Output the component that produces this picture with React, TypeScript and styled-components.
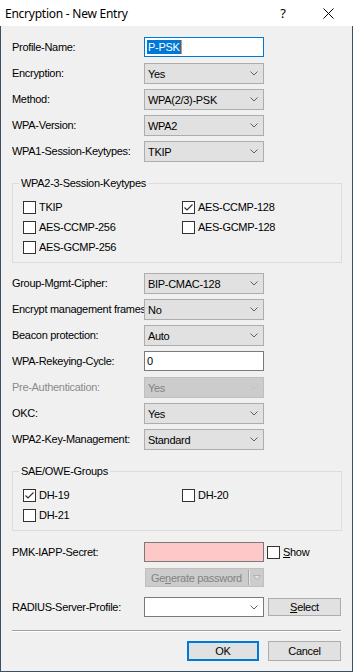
import React from "react";
import styled, { createGlobalStyle } from "styled-components";

const UI_FONT = `"Liberation Sans", Arial, sans-serif`;
const TITLE_FONT = `"Noto Sans", "Open Sans", sans-serif`;

const GlobalStyle = createGlobalStyle`
  html, body { margin: 0; padding: 0; background: #f0f0f0; }
  body { font-family: ${UI_FONT}; font-size: 11px; color: #000; letter-spacing: -0.3px; }
`;

const Window = styled.div`
  width: 353px;
  height: 672px;
  display: flex;
  flex-direction: column;
  box-sizing: border-box;
  overflow: hidden;
`;

const TitleBar = styled.div`
  height: 26px;
  flex: none;
  display: flex;
  align-items: center;
  background: #fff;
  padding-left: 5px;
  font-family: ${TITLE_FONT};
  font-size: 12px;
  color: #000;
`;

const TitleText = styled.div`
  flex: 1;
  letter-spacing: -0.25px;
`;

const TitleButton = styled.div<{ $w: number }>`
  width: ${(p) => p.$w}px;
  height: 26px;
  display: flex;
  align-items: center;
  justify-content: center;
  font-size: 13px;
`;

const Body = styled.div`
  flex: 1;
  display: flex;
  flex-direction: column;
  background: #f0f0f0;
  border: 1px solid #3f4f63;
  border-top: none;
  padding: 8px 10px 0 11px;
`;

const FieldRow = styled.div<{ $h?: number; $pt?: number; $mt?: number }>`
  display: flex;
  align-items: flex-start;
  box-sizing: border-box;
  height: ${(p) => p.$h ?? 26}px;
  padding-top: ${(p) => p.$pt ?? 3}px;
  margin-top: ${(p) => p.$mt ?? 0}px;
  flex: none;
`;

const Label = styled.div<{ $disabled?: boolean }>`
  width: 132px;
  flex: none;
  height: 21px;
  line-height: 21px;
  white-space: nowrap;
  overflow: hidden;
  color: ${(p) => (p.$disabled ? "#8a8a8a" : "#000")};
`;

type ComboVariant = "normal" | "disabled" | "white";

const comboColors: Record<ComboVariant, { bg: string; border: string; fg: string }> = {
  normal: { bg: "#e1e1e1", border: "#adadad", fg: "#000" },
  disabled: { bg: "#cccccc", border: "#bfbfbf", fg: "#838383" },
  white: { bg: "#ffffff", border: "#7a7a7a", fg: "#000" },
};

const Combo = styled.div<{ $variant: ComboVariant; $h?: number }>`
  width: 120px;
  height: ${(p) => p.$h ?? 21}px;
  box-sizing: border-box;
  display: flex;
  align-items: center;
  justify-content: space-between;
  padding: 0 5px 0 3px;
  background: ${(p) => comboColors[p.$variant].bg};
  border: 1px solid ${(p) => comboColors[p.$variant].border};
  color: ${(p) => comboColors[p.$variant].fg};
  white-space: nowrap;
  flex: none;
`;

const TextBox = styled.div<{ $focused?: boolean; $tint?: string }>`
  width: 120px;
  height: 20px;
  box-sizing: border-box;
  display: flex;
  align-items: center;
  padding-left: 2px;
  background: ${(p) => p.$tint ?? "#fff"};
  border: 1px solid ${(p) => (p.$focused ? "#0078d7" : "#7a7a7a")};
  flex: none;
`;

const Selection = styled.span`
  background: #0078d7;
  color: #fff;
  line-height: 14px;
  padding: 0 1px;
`;

const Caret = styled.span`
  display: inline-block;
  width: 1px;
  height: 14px;
  background: #ff8728;
`;

const GroupBox = styled.fieldset<{ $mt: number }>`
  margin: ${(p) => p.$mt}px 0 0 0;
  padding: 0;
  border: 1px solid #dcdcdc;
  flex: none;
  min-inline-size: 0;
`;

const Legend = styled.legend`
  margin-left: 6px;
  padding: 0 2px;
  font-size: 11px;
  line-height: 13px;
`;

const CheckGrid = styled.div`
  display: grid;
  grid-template-columns: 159px 1fr;
  grid-auto-rows: 20px;
  padding: 7px 0 5px 10px;
`;

const CheckItem = styled.label<{ $h?: number; $ml?: number }>`
  display: flex;
  align-items: center;
  gap: 3px;
  height: ${(p) => p.$h ?? 20}px;
  margin-left: ${(p) => p.$ml ?? 0}px;
  white-space: nowrap;
`;

const Box = styled.span`
  width: 13px;
  height: 13px;
  box-sizing: border-box;
  border: 1px solid #333;
  background: #fff;
  display: flex;
  align-items: center;
  justify-content: center;
  flex: none;
`;

const Mnemonic = styled.span`
  text-decoration: underline;
`;

const SplitButton = styled.div`
  width: 119px;
  height: 19px;
  margin-left: 1px;
  box-sizing: border-box;
  display: flex;
  align-items: center;
  background: #cccccc;
  border: 1px solid #bfbfbf;
  color: #838383;
  flex: none;
`;

const SplitLabel = styled.div`
  flex: 1;
  padding-left: 5px;
  white-space: nowrap;
`;

const SplitDivider = styled.div`
  width: 1px;
  height: 15px;
  background: #a8a8a8;
  border-right: 1px solid #e6e6e6;
`;

const SplitArrow = styled.div`
  width: 13px;
  display: flex;
  align-items: center;
  justify-content: center;
`;

const PushButton = styled.div<{ $default?: boolean; $w: number; $h?: number; $mt?: number }>`
  width: ${(p) => p.$w}px;
  height: ${(p) => p.$h ?? 20}px;
  margin-top: ${(p) => p.$mt ?? 0}px;
  box-sizing: border-box;
  display: flex;
  align-items: center;
  justify-content: center;
  background: #e1e1e1;
  border: ${(p) => (p.$default ? "2px solid #0078d7" : "1px solid #adadad")};
  flex: none;
`;

const Spacer = styled.div<{ $w: number }>`
  width: ${(p) => p.$w}px;
  flex: none;
`;

const Separator = styled.div`
  margin-top: 13px;
  margin-right: 1px;
  height: 0;
  border-top: 1px solid #a0a0a0;
  border-bottom: 1px solid #ffffff;
  flex: none;
`;

const ButtonBar = styled.div`
  display: flex;
  justify-content: flex-end;
  gap: 9px;
  margin-top: 9px;
  margin-right: 1px;
  flex: none;
`;

const Chevron = ({ color = "#606060" }: { color?: string }) => (
  <svg width="8" height="5" viewBox="0 0 8 5">
    <polyline points="0.5,0.5 4,4 7.5,0.5" fill="none" stroke={color} strokeWidth="1" />
  </svg>
);

const CheckMark = () => (
  <svg width="11" height="11" viewBox="0 0 11 11">
    <polyline points="1.5,5.5 4,8 9.5,2.5" fill="none" stroke="#333" strokeWidth="1.2" />
  </svg>
);

const CloseIcon = () => (
  <svg width="11" height="11" viewBox="0 0 11 11">
    <line x1="0.5" y1="0.5" x2="10.5" y2="10.5" stroke="#000" strokeWidth="1" />
    <line x1="10.5" y1="0.5" x2="0.5" y2="10.5" stroke="#000" strokeWidth="1" />
  </svg>
);

const DownTriangle = () => (
  <svg width="8" height="5" viewBox="0 0 8 5">
    <polygon points="0.5,0.5 7.5,0.5 4,4.5" fill="#e4e4e4" stroke="#a8a8a8" strokeWidth="0.8" />
  </svg>
);

const Check = ({ checked, children }: { checked?: boolean; children: React.ReactNode }) => (
  <CheckItem>
    <Box>{checked && <CheckMark />}</Box>
    <span>{children}</span>
  </CheckItem>
);

const ComboField = ({
  label,
  value,
  disabled,
  mt,
}: {
  label: string;
  value: string;
  disabled?: boolean;
  mt?: number;
}) => (
  <FieldRow $mt={mt}>
    <Label $disabled={disabled}>{label}</Label>
    <Combo $variant={disabled ? "disabled" : "normal"}>
      <span>{value}</span>
      <Chevron color={disabled ? "#bfbfbf" : "#606060"} />
    </Combo>
  </FieldRow>
);

export default function App() {
  return (
    <>
      <GlobalStyle />
      <Window>
        <TitleBar>
          <TitleText>Encryption - New Entry</TitleText>
          <TitleButton $w={40}>?</TitleButton>
          <TitleButton $w={50}>
            <CloseIcon />
          </TitleButton>
        </TitleBar>
        <Body>
          <FieldRow>
            <Label>Profile-Name:</Label>
            <TextBox $focused>
              <Selection>P-PSK</Selection>
              <Caret />
            </TextBox>
          </FieldRow>
          <ComboField label="Encryption:" value="Yes" />
          <ComboField label="Method:" value="WPA(2/3)-PSK" />
          <ComboField label="WPA-Version:" value="WPA2" />
          <ComboField label="WPA1-Session-Keytypes:" value="TKIP" />

          <GroupBox $mt={13}>
            <Legend>WPA2-3-Session-Keytypes</Legend>
            <CheckGrid>
              <Check>TKIP</Check>
              <Check checked>AES-CCMP-128</Check>
              <Check>AES-CCMP-256</Check>
              <Check>AES-GCMP-128</Check>
              <Check>AES-GCMP-256</Check>
            </CheckGrid>
          </GroupBox>

          <ComboField label="Group-Mgmt-Cipher:" value="BIP-CMAC-128" mt={7} />
          <ComboField label="Encrypt management frames:" value="No" />
          <ComboField label="Beacon protection:" value="Auto" />
          <FieldRow>
            <Label>WPA-Rekeying-Cycle:</Label>
            <TextBox>0</TextBox>
          </FieldRow>
          <ComboField label="Pre-Authentication:" value="Yes" disabled />
          <ComboField label="OKC:" value="Yes" />
          <ComboField label="WPA2-Key-Management:" value="Standard" />

          <GroupBox $mt={13}>
            <Legend>SAE/OWE-Groups</Legend>
            <CheckGrid>
              <Check checked>DH-19</Check>
              <Check>DH-20</Check>
              <Check>DH-21</Check>
            </CheckGrid>
          </GroupBox>

          <FieldRow $mt={8}>
            <Label>PMK-IAPP-Secret:</Label>
            <TextBox $tint="#ffc8c8" />
            <CheckItem $ml={3}>
              <Box />
              <span>
                <Mnemonic>S</Mnemonic>how
              </span>
            </CheckItem>
          </FieldRow>
          <FieldRow $h={22}>
            <Spacer $w={132} />
            <SplitButton>
              <SplitLabel>
                Ge<Mnemonic>n</Mnemonic>erate password
              </SplitLabel>
              <SplitDivider />
              <SplitArrow>
                <DownTriangle />
              </SplitArrow>
            </SplitButton>
          </FieldRow>
          <FieldRow $pt={10} $h={30}>
            <Label>RADIUS-Server-Profile:</Label>
            <Combo $variant="white" $h={20}>
              <span />
              <Chevron />
            </Combo>
            <Spacer $w={4} />
            <PushButton $w={73} $h={18} $mt={1}>
              <span>
                <Mnemonic>S</Mnemonic>elect
              </span>
            </PushButton>
          </FieldRow>

          <Separator />
          <ButtonBar>
            <PushButton $default $w={72}>
              OK
            </PushButton>
            <PushButton $w={73}>Cancel</PushButton>
          </ButtonBar>
        </Body>
      </Window>
    </>
  );
}
